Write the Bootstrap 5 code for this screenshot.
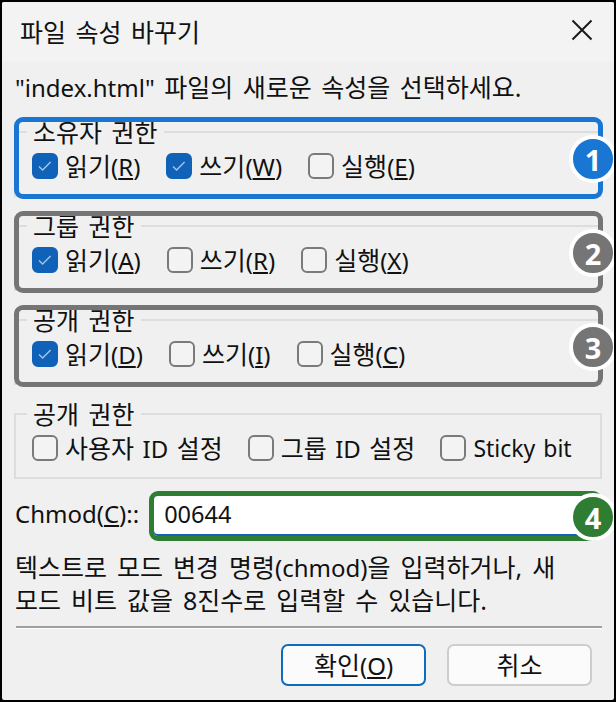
<!DOCTYPE html>
<html lang="ko">
<head>
<meta charset="utf-8">
<title>파일 속성 바꾸기</title>
<link href="https://cdn.jsdelivr.net/npm/bootstrap@5.3.0/dist/css/bootstrap.min.css" rel="stylesheet">
<style>
html,body{margin:0;background:#000;}
body{font-family:"Noto Sans","Noto Sans CJK KR",sans-serif;font-size:25px;line-height:33px;color:#111;word-spacing:3px;}
.dlg{width:616px;height:702px;border:2px solid #000;background:#f0f0f0;position:relative;overflow:hidden;border-radius:4px;}
.dlg-title{height:60px;background:#f3f3f3;padding:0 16px 0 18px;}
.dlg-title span{line-height:56px;}
.dlg-x{margin-right:5px;margin-bottom:4px;}
.dlg-body{padding:9px 11px 0 12px;}
.dlg-intro{padding-left:1px;height:46px;}
.lat{font-size:24px;}
.lat-s{font-size:23px;}
.perm{position:relative;height:82px;margin-bottom:12px;}
.perm fieldset{height:80px;width:588px;padding:6px 0 0 0;border:2px solid #ddd;margin:0;min-width:0;}
.perm legend{float:none;width:auto;font-size:25px;line-height:30px;margin:0 0 0 11px;padding:0 6px;}
.perm-row{display:flex;gap:26px;margin-left:16px;}
.perm-tight{gap:25px;word-spacing:2px;}
.hl::after{content:"";position:absolute;inset:0;border:5px solid var(--hl);border-radius:9px;pointer-events:none;}
.hl-blue{--hl:#1976d2;}
.hl-gray{--hl:#757575;}
.chk{display:flex;align-items:center;height:26px;gap:7px;margin:0;white-space:nowrap;}
.chk .form-check-input{width:26px;height:26px;margin:0;background-color:#f3f3f3;border:2px solid #7a7a7a;border-radius:6px;flex:none;float:none;box-shadow:none;}
.chk .form-check-input:checked{background-color:#0f62b8;border-color:#0f62b8;background-size:16px 16px;background-position:center;background-repeat:no-repeat;background-image:url("data:image/svg+xml,%3csvg xmlns='http://www.w3.org/2000/svg' viewBox='0 0 16 16'%3e%3cpath fill='none' stroke='%23a6c5e8' stroke-width='1.4' d='M2 8.5l3.6 3.5 8-8'/%3e%3c/svg%3e");}
.mode-row{display:flex;align-items:center;gap:10px;position:relative;margin-top:-2px;}
.mode-row label{margin:0;padding:0 0 5px 1px;white-space:nowrap;}
.mode-input.form-control{height:50px;width:453px;flex:none;border:5px solid #2e7d32;border-radius:9px;background:#fff;box-shadow:inset 0 -2px 0 #0f62b8;font-size:23.5px;padding:0 10px 5px;color:#111;font-family:inherit;}
.dlg-help{padding-left:1px;margin:10px 0 0;word-spacing:3.5px;}
.dlg-sep{height:3px;background:#9f9f9f;border:0;opacity:1;margin:9px 0 15px 2px;width:586px;border-bottom:1px solid #fff;}
.dlg-foot{display:flex;justify-content:flex-end;gap:21px;padding-right:11px;}
.dlg-btn.btn{width:145px;height:42px;padding:0;background:#fbfbfb;border:2px solid #cdcdcd;border-radius:7px;font-size:25px;line-height:36px;color:#111;}
.dlg-btn.dlg-def{border-color:#0f6cbd;}
.mark-num{position:absolute;right:-14px;width:48px;height:48px;border:4px solid #fff;border-radius:50%;color:#fff;font-family:"Noto Sans",sans-serif;font-weight:700;font-size:29px;display:flex;align-items:center;justify-content:center;line-height:1;z-index:2;}
.perm .mark-num{top:18px;}
.mode-row .mark-num{top:2px;}
.mn-blue{background:#1976d2;}
.mn-gray{background:#757575;}
.mn-green{background:#2e7d32;}
</style>
</head>
<body>
<div class="dlg">
  <div class="dlg-title d-flex align-items-center justify-content-between">
    <span>파일 속성 바꾸기</span>
    <svg class="dlg-x" width="22" height="22" viewBox="0 0 22 22" aria-hidden="true"><path d="M1.5 1.5l19 19M20.5 1.5l-19 19" fill="none" stroke="#1a1a1a" stroke-width="2"/></svg>
  </div>
  <div class="dlg-body">
    <div class="dlg-intro"><span class="lat">"index.html"</span> 파일의 새로운 속성을 선택하세요.</div>

    <div class="perm hl hl-blue">
      <fieldset>
        <legend>소유자 권한</legend>
        <div class="perm-row">
          <label class="chk"><input class="form-check-input" type="checkbox" checked><span>읽기<span class="lat">(<u>R</u>)</span></span></label>
          <label class="chk"><input class="form-check-input" type="checkbox" checked><span>쓰기<span class="lat">(<u>W</u>)</span></span></label>
          <label class="chk"><input class="form-check-input" type="checkbox"><span>실행<span class="lat">(<u>E</u>)</span></span></label>
        </div>
      </fieldset>
      <span class="mark-num mn-blue">1</span>
    </div>

    <div class="perm hl hl-gray">
      <fieldset>
        <legend>그룹 권한</legend>
        <div class="perm-row">
          <label class="chk"><input class="form-check-input" type="checkbox" checked><span>읽기<span class="lat">(<u>A</u>)</span></span></label>
          <label class="chk"><input class="form-check-input" type="checkbox"><span>쓰기<span class="lat">(<u>R</u>)</span></span></label>
          <label class="chk"><input class="form-check-input" type="checkbox"><span>실행<span class="lat">(<u>X</u>)</span></span></label>
        </div>
      </fieldset>
      <span class="mark-num mn-gray">2</span>
    </div>

    <div class="perm hl hl-gray">
      <fieldset>
        <legend>공개 권한</legend>
        <div class="perm-row">
          <label class="chk"><input class="form-check-input" type="checkbox" checked><span>읽기<span class="lat">(<u>D</u>)</span></span></label>
          <label class="chk"><input class="form-check-input" type="checkbox"><span>쓰기<span class="lat">(<u>I</u>)</span></span></label>
          <label class="chk"><input class="form-check-input" type="checkbox"><span>실행<span class="lat">(<u>C</u>)</span></span></label>
        </div>
      </fieldset>
      <span class="mark-num mn-gray">3</span>
    </div>

    <div class="perm">
      <fieldset>
        <legend>공개 권한</legend>
        <div class="perm-row perm-tight">
          <label class="chk"><input class="form-check-input" type="checkbox"><span>사용자 <span class="lat">ID</span> 설정</span></label>
          <label class="chk"><input class="form-check-input" type="checkbox"><span>그룹 <span class="lat">ID</span> 설정</span></label>
          <label class="chk"><input class="form-check-input" type="checkbox"><span class="lat-s">Sticky bit</span></label>
        </div>
      </fieldset>
    </div>

    <div class="mode-row">
      <label for="modeval" class="lat">Chmod(<u>C</u>)::</label>
      <input id="modeval" class="form-control mode-input" type="text" value="00644">
      <span class="mark-num mn-green">4</span>
    </div>

    <p class="dlg-help">텍스트로 모드 변경 명령<span class="lat">(chmod)</span>을 입력하거나, 새<br>모드 비트 값을 8진수로 입력할 수 있습니다.</p>
    <hr class="dlg-sep">
    <div class="dlg-foot">
      <button type="button" class="btn dlg-btn dlg-def">확인<span class="lat">(<u>O</u>)</span></button>
      <button type="button" class="btn dlg-btn">취소</button>
    </div>
  </div>
</div>
</body>
</html>
